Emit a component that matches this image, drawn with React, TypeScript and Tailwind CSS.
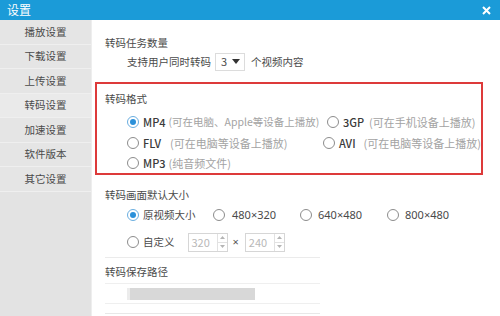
import React from "react";

const font = { fontFamily: '"Noto Sans CJK SC", "Noto Sans", sans-serif' };

function Radio({ checked = false }: { checked?: boolean }) {
  return (
    <span
      className={`inline-flex items-center justify-center w-[12px] h-[12px] rounded-full border ${
        checked ? "border-[#6aaee0]" : "border-[#8c8c8c]"
      } bg-white shrink-0`}
    >
      {checked && <span className="w-[6px] h-[6px] rounded-full bg-[#2b90d9]" />}
    </span>
  );
}

function Spin({ v }: { v: string }) {
  return (
    <span className="inline-flex items-center h-[19px] w-[40px] border border-[#d6d6d6] bg-white">
      <span className="flex-1 text-[11px] text-[#b8b8b8] pl-[3px] leading-none">{v}</span>
      <span className="flex flex-col h-full w-[10px] border-l border-[#e2e2e2]">
        <span className="flex-1 flex items-center justify-center">
          <svg width="5" height="3" viewBox="0 0 5 3"><path d="M0 3 L2.5 0 L5 3Z" fill="#b5b5b5" /></svg>
        </span>
        <span className="flex-1 flex items-center justify-center border-t border-[#e2e2e2]">
          <svg width="5" height="3" viewBox="0 0 5 3"><path d="M0 0 L2.5 3 L5 0Z" fill="#b5b5b5" /></svg>
        </span>
      </span>
    </span>
  );
}

const side = ["播放设置", "下载设置", "上传设置", "转码设置", "加速设置", "软件版本", "其它设置"];

export default function App() {
  return (
    <div className="w-[500px] h-[316px] overflow-hidden flex flex-col bg-white" style={font}>
      <div className="h-[20px] bg-[#1b9bd8] flex items-center justify-between pl-[7px] pr-[9px] shrink-0">
        <span className="text-white text-[12px] leading-none">设置</span>
        <svg width="9" height="9" viewBox="0 0 9 9">
          <path d="M1 1 L8 8 M8 1 L1 8" stroke="white" strokeWidth="2" />
        </svg>
      </div>
      <div className="flex flex-1 min-h-0">
        <div className="w-[92px] shrink-0 bg-[#e3e3e3] flex flex-col border-r border-[#eeeeee]">
          {side.map((s, i) => (
            <div
              key={s}
              className={`h-[24.5px] shrink-0 flex items-center justify-center text-[10.5px] text-[#4a4a4a] border-b border-[#efefef] ${
                i === 3 ? "bg-[#eaeaea]" : "bg-[#e5e5e5]"
              }`}
            >
              {s}
            </div>
          ))}
        </div>
        <div className="flex-1 min-w-0 flex flex-col text-[10.5px] text-[#4a4a4a] overflow-hidden">
          <div className="h-[15px] shrink-0" />
          <div className="pl-[13px] h-[16px] shrink-0 flex items-center">转码任务数量</div>
          <div className="h-[1px] shrink-0" />
          <div className="pl-[35px] h-[19px] shrink-0 flex items-center">
            <span>支持用户同时转码</span>
            <span className="ml-[4px] inline-flex items-center justify-between h-[18px] w-[30px] border border-[#dcdcdc] pl-[5px] pr-[4px] text-[11px]">
              <span>3</span>
              <svg width="8" height="5" viewBox="0 0 8 5"><path d="M0 0 L8 0 L4 5Z" fill="#333" /></svg>
            </span>
            <span className="ml-[6px]">个视频内容</span>
          </div>
          <div className="h-[11px] shrink-0" />
          <div className="ml-[3px] w-[388px] h-[93px] shrink-0 border-2 border-[#dd3a3a] flex flex-col">
            <div className="h-[7px] shrink-0" />
            <div className="pl-[8px] h-[16px] shrink-0 flex items-center">转码格式</div>
            <div className="h-[5px] shrink-0" />
            <div className="pl-[30px] h-[20.5px] shrink-0 flex items-center">
              <div className="w-[200px] flex items-center">
                <Radio checked />
                <span className="ml-[4px] text-[11px] font-medium text-[#3a3a3a]">MP4</span>
                <span className="ml-[3px] text-[10.5px] text-[#a3a3a3] whitespace-nowrap">(可在电脑、Apple等设备上播放)</span>
              </div>
              <Radio />
              <span className="ml-[4px] text-[11px] font-medium text-[#3a3a3a]">3GP</span>
              <span className="ml-[5px] text-[11px] text-[#a3a3a3] whitespace-nowrap">(可在手机设备上播放)</span>
            </div>
            <div className="pl-[30px] h-[20.5px] shrink-0 flex items-center">
              <div className="w-[200px] flex items-center">
                <Radio />
                <span className="ml-[4px] text-[11px] font-medium text-[#3a3a3a]">FLV</span>
                <span className="ml-[9px] text-[11px] text-[#a3a3a3] whitespace-nowrap">(可在电脑等设备上播放)</span>
              </div>
              <Radio />
              <span className="ml-[4px] text-[11px] font-medium text-[#3a3a3a]">AVI</span>
              <span className="ml-[8px] text-[11px] text-[#a3a3a3] whitespace-nowrap">(可在电脑等设备上播放)</span>
            </div>
            <div className="pl-[30px] h-[20.5px] shrink-0 flex items-center">
              <Radio />
              <span className="ml-[4px] text-[11px] font-medium text-[#3a3a3a]">MP3</span>
              <span className="ml-[3px] text-[11px] text-[#a3a3a3] whitespace-nowrap">(纯音频文件)</span>
            </div>
          </div>
          <div className="h-[12px] shrink-0" />
          <div className="pl-[13px] h-[16px] shrink-0 flex items-center">转码画面默认大小</div>
          <div className="h-[2px] shrink-0" />
          <div className="pl-[35px] h-[20px] shrink-0 flex items-center">
            <div className="w-[86px] flex items-center">
              <Radio checked />
              <span className="ml-[4px]">原视频大小</span>
            </div>
            <div className="w-[87px] flex items-center">
              <Radio />
              <span className="ml-[7px] text-[11px] font-['Noto_Sans',sans-serif]">480×320</span>
            </div>
            <div className="w-[87px] flex items-center">
              <Radio />
              <span className="ml-[6px] text-[11px] font-['Noto_Sans',sans-serif]">640×480</span>
            </div>
            <div className="flex items-center">
              <Radio />
              <span className="ml-[6px] text-[11px] font-['Noto_Sans',sans-serif]">800×480</span>
            </div>
          </div>
          <div className="h-[7px] shrink-0" />
          <div className="pl-[35px] h-[20px] shrink-0 flex items-center">
            <Radio />
            <span className="ml-[4px]">自定义</span>
            <span className="ml-[13px] flex"><Spin v="320" /></span>
            <span className="ml-[5px] mr-[6px] text-[11px] text-[#555] font-['Noto_Sans',sans-serif]">×</span>
            <Spin v="240" />
          </div>
          <div className="h-[5px] shrink-0" />
          <div className="ml-[13px] w-[215px] shrink-0 border-t border-[#ebebeb]" />
          <div className="h-[6px] shrink-0" />
          <div className="pl-[13px] h-[16px] shrink-0 flex items-center">转码保存路径</div>
          <div className="h-[3px] shrink-0" />
          <div className="ml-[13px] w-[215px] shrink-0 border-t border-[#efefef]" />
          <div className="ml-[35px] h-[19px] shrink-0 flex items-center">
            <div className="w-[3px] h-[12px] bg-[#ececec]" />
            <div className="w-[125px] h-[12px] bg-[#d8d8d8]" />
          </div>
          <div className="ml-[13px] w-[215px] shrink-0 border-t border-[#efefef]" />
          <div className="h-[9px] shrink-0" />
          <div className="ml-[13px] w-[215px] shrink-0 border-t border-[#e8e8e8]" />
        </div>
      </div>
    </div>
  );
}
